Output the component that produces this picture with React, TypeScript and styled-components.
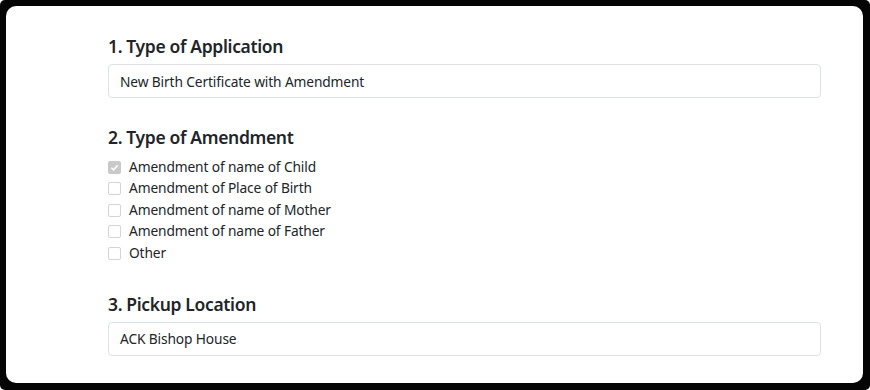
import React from "react";
import styled, { createGlobalStyle } from "styled-components";

const Global = createGlobalStyle`
  html, body { margin: 0; padding: 0; background: #ffffff; }
  body { font-family: "Noto Sans", "Open Sans", sans-serif; color: #212529; }
  * { box-sizing: border-box; }
`;

const Frame = styled.div`
  width: 870px;
  height: 390px;
  background: #050505;
  border-radius: 5px;
  padding: 6px 7px 7px 6px;
`;

const Card = styled.div`
  height: 100%;
  background: #ffffff;
  border-radius: 10px;
  padding: 28px 42px 0 102px;
  display: flex;
  flex-direction: column;
`;

const Heading = styled.h2<{ $top?: number }>`
  margin: ${(p) => p.$top ?? 0}px 0 0 0;
  font-size: 17.5px;
  letter-spacing: -0.35px;
  line-height: 24px;
  font-weight: 600;
  color: #212529;
`;

const Field = styled.div`
  margin-top: 6px;
  height: 34px;
  border: 1px solid #dee2e6;
  border-radius: 4px;
  background: #ffffff;
  padding: 0 11px;
  display: flex;
  align-items: center;
  font-size: 13.75px;
  letter-spacing: -0.13px;
  color: #212529;
`;

const List = styled.ul`
  list-style: none;
  margin: 6.5px 0 0 0;
  padding: 0;
  display: flex;
  flex-direction: column;
`;

const Row = styled.li`
  height: 21.5px;
  line-height: 21.5px;
  display: flex;
  align-items: center;
  font-size: 13.75px;
  letter-spacing: -0.13px;
  color: #212529;
`;

const Box = styled.span<{ $checked?: boolean }>`
  width: 13px;
  height: 13px;
  margin-right: 8px;
  border-radius: 2px;
  flex: none;
  display: inline-flex;
  align-items: center;
  justify-content: center;
  background: ${(p) => (p.$checked ? "#c9c9c9" : "#ffffff")};
  border: 1px solid ${(p) => (p.$checked ? "#c9c9c9" : "#d4d4d4")};
  margin-top: 2px;
`;

const options = [
  { label: "Amendment of name of Child", checked: true },
  { label: "Amendment of Place of Birth", checked: false },
  { label: "Amendment of name of Mother", checked: false },
  { label: "Amendment of name of Father", checked: false },
  { label: "Other", checked: false },
];

export default function App() {
  return (
    <>
      <Global />
      <Frame>
        <Card>
          <Heading>1. Type of Application</Heading>
          <Field>New Birth Certificate with Amendment</Field>
          <Heading $top={27}>2. Type of Amendment</Heading>
          <List>
            {options.map((o) => (
              <Row key={o.label}>
                <Box $checked={o.checked}>
                  {o.checked && (
                    <svg width="9" height="9" viewBox="0 0 10 10">
                      <path d="M1.5 5.2 L4 7.6 L8.6 2.4" fill="none" stroke="#ffffff" strokeWidth="1.6" />
                    </svg>
                  )}
                </Box>
                {o.label}
              </Row>
            ))}
          </List>
          <Heading $top={28.5}>3. Pickup Location</Heading>
          <Field>ACK Bishop House</Field>
        </Card>
      </Frame>
    </>
  );
}
